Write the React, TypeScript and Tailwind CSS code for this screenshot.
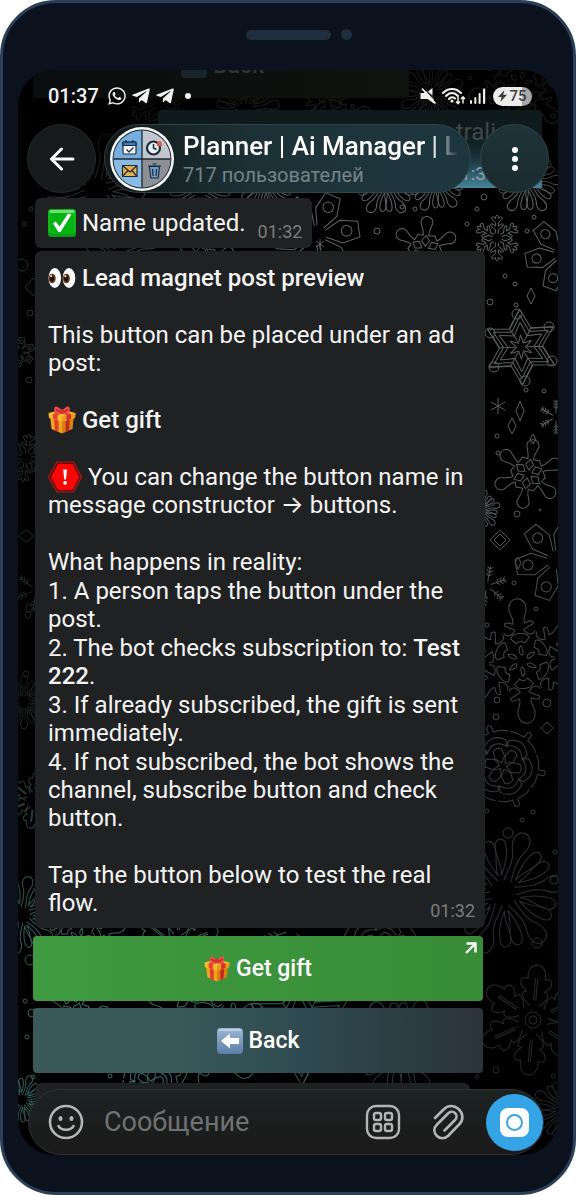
import React, { FC, ReactNode } from "react";
import { FaTelegramPlane, FaWhatsapp } from "react-icons/fa";

interface IconProps {
  className?: string;
}

interface FlakeProps {
  x: number;
  y: number;
  size: number;
  turn?: number;
  kind: FlakeKind;
}

type FlakeKind =
  | "branch"
  | "petal"
  | "star"
  | "drop"
  | "wheel"
  | "leaf"
  | "gem"
  | "feather"
  | "bloom";

// One arm of every flake, drawn upwards from the centre on a radius of 50
const ARMS: Record<FlakeKind, string> = {
  branch:
    "M-3 -10V-18L-13 -26Q-16 -30 -11 -31L-3 -26V-33L-11 -41Q-13 -46 -8 -46L-3 -42V-47Q0 -52 3 -47V-42L8 -46Q13 -46 11 -41L3 -33V-26L11 -31Q16 -30 13 -26L3 -18V-10",
  petal:
    "M-3 -10C-2 -22 -1 -26 -4 -34C-9 -42 -7 -51 0 -51S9 -42 4 -34C1 -26 2 -22 3 -10M-6 -13C-8 -22 -22 -30 -19 -38C-14 -46 -6 -34 -6 -13M6 -13C8 -22 22 -30 19 -38C14 -46 6 -34 6 -13",
  star: "M-25 -43L0 -28L25 -43M-21 -36L0 -23L21 -36M-16 -28L0 -17L16 -28M-8 -14L0 -6L8 -14M-25 -43V-14M0 -28V-8",
  drop: "M-4 -22C-4 -32 -9 -38 -9 -42A9 9 0 0 1 9 -42C9 -38 4 -32 4 -22L14 -22M0 -22L-6 -14L0 -6L6 -14ZM-4 -22L-13 -23",
  wheel:
    "M-3 -42V-49Q0 -53 3 -49V-42Q13 -42 20 -37M-3 -42Q-13 -42 -20 -37M-12 -21Q0 -34 12 -21L14 -28Q0 -42 -14 -28ZM-6 -11L0 -4L6 -11L5 -20Q0 -24 -5 -20Z",
  leaf: "M-4 -13C-14 -20 -13 -27 -8 -26C-17 -32 -16 -40 -8 -38C-9 -46 -5 -51 0 -51S9 -46 8 -38C16 -40 17 -32 8 -26C13 -27 14 -20 4 -13M-1 -18V-39M1 -39V-18",
  gem: "M-4 -10L-13 -28L-9 -48L9 -48L13 -28L4 -10M0 -32m-6 -2a6 6 0 1 0 12 0a6 6 0 1 0 -12 0",
  feather:
    "M0 -10V-48M0 -40L-7 -47M0 -40L7 -47M0 -32L-8 -39M0 -32L8 -39M0 -24L-7 -30M0 -24L7 -30",
  bloom:
    "M-4 -30L-14 -35Q-14 -40 -6 -36C-3 -42 -10 -46 -8 -52A8 8 0 0 1 8 -52C10 -46 3 -42 6 -36Q14 -40 14 -35L4 -30M-15 -28C-13 -24 -8 -24 -4 -30M15 -28C13 -24 8 -24 4 -30M-9 -22C-7 -28 7 -28 9 -22L4 -17Q0 -21 -4 -17ZM0 -15C-3 -11 -2 -7 0 -6S3 -11 0 -15",
};

const FLAKES: FlakeProps[] = [
  { x: 497, y: 238, size: 23, kind: "branch" },
  { x: 425, y: 250, size: 33, turn: 4, kind: "drop" },
  { x: 317, y: 235, size: 44, turn: 22, kind: "gem" },
  { x: 386, y: 182, size: 34, turn: 30, kind: "petal" },
  { x: 436, y: 180, size: 32, turn: 24, kind: "petal" },
  { x: 527, y: 180, size: 34, turn: 30, kind: "petal" },
  { x: 562, y: 254, size: 38, turn: 20, kind: "gem" },
  { x: 521, y: 347, size: 38, turn: 28, kind: "star" },
  { x: 556, y: 417, size: 18, kind: "feather" },
  { x: 528, y: 474, size: 34, turn: 10, kind: "drop" },
  { x: 480, y: 510, size: 20, turn: 15, kind: "petal" },
  { x: 556, y: 560, size: 42, turn: 20, kind: "gem" },
  { x: 487, y: 586, size: 21, turn: 10, kind: "feather" },
  { x: 522, y: 661, size: 52, turn: -5, kind: "bloom" },
  { x: 503, y: 766, size: 42, turn: 40, kind: "wheel" },
  { x: 503, y: 893, size: 62, turn: 20, kind: "petal" },
  { x: 533, y: 1020, size: 54, turn: 5, kind: "leaf" },
  { x: 566, y: 1110, size: 34, kind: "petal" },
  { x: 96, y: 190, size: 56, turn: 12, kind: "petal" },
  { x: 200, y: 190, size: 34, kind: "petal" },
  { x: 265, y: 182, size: 32, turn: 18, kind: "petal" },
  { x: 160, y: 104, size: 30, turn: 8, kind: "branch" },
  { x: 245, y: 110, size: 34, turn: 20, kind: "petal" },
  { x: 330, y: 118, size: 34, turn: 20, kind: "bloom" },
  { x: 432, y: 94, size: 32, turn: 8, kind: "petal" },
  { x: 520, y: 84, size: 44, turn: 15, kind: "bloom" },
  { x: 120, y: 256, size: 40, turn: 8, kind: "petal" },
  { x: 205, y: 262, size: 30, turn: 8, kind: "drop" },
  { x: 20, y: 352, size: 15, turn: 8, kind: "gem" },
  { x: 26, y: 458, size: 24, turn: 8, kind: "branch" },
  { x: 36, y: 590, size: 22, turn: 8, kind: "feather" },
  { x: 24, y: 702, size: 26, kind: "petal" },
  { x: 34, y: 800, size: 28, turn: 8, kind: "leaf" },
  { x: 22, y: 915, size: 38, turn: 10, kind: "petal" },
  { x: 80, y: 940, size: 40, turn: 10, kind: "bloom" },
  { x: 176, y: 946, size: 44, turn: 8, kind: "leaf" },
  { x: 292, y: 930, size: 30, turn: 10, kind: "feather" },
  { x: 380, y: 952, size: 46, turn: 20, kind: "wheel" },
  { x: 74, y: 1018, size: 36, turn: 20, kind: "drop" },
  { x: 150, y: 1084, size: 32, turn: 10, kind: "wheel" },
  { x: 200, y: 1032, size: 56, turn: 10, kind: "bloom" },
  { x: 300, y: 1030, size: 56, turn: 28, kind: "star" },
  { x: 400, y: 1046, size: 50, turn: 28, kind: "petal" },
  { x: 22, y: 1100, size: 25, turn: 20, kind: "petal" },
];

// x, y, radius
const BUBBLES: [number, number, number][] = [
  [22, 265, 6],
  [30, 313, 3],
  [29, 380, 3],
  [24, 224, 2],
  [31, 209, 2],
  [30, 608, 4],
  [28, 615, 3],
  [26, 674, 3],
  [30, 960, 5],
  [25, 1001, 2],
  [32, 1013, 4],
  [27, 1037, 2],
  [33, 1077, 2],
  [110, 1076, 2],
  [377, 231, 3],
  [402, 207, 2],
  [415, 209, 2],
  [477, 209, 2],
  [484, 197, 3],
  [467, 224, 2],
  [527, 231, 2],
  [534, 217, 2],
  [505, 276, 2],
  [515, 284, 2],
  [490, 302, 3],
  [517, 314, 5],
  [516, 305, 2],
  [490, 333, 5],
  [549, 327, 5],
  [494, 367, 5],
  [552, 361, 5],
  [525, 381, 5],
  [526, 390, 2],
  [544, 391, 2],
  [497, 436, 2],
  [498, 453, 2],
  [517, 514, 3],
  [540, 510, 1],
  [514, 583, 2],
  [536, 609, 2],
  [487, 625, 2],
  [497, 700, 3],
  [547, 703, 4],
  [496, 717, 3],
  [487, 811, 2],
  [522, 820, 2],
  [533, 812, 2],
  [508, 833, 5],
  [554, 880, 4],
  [555, 852, 2],
  [537, 943, 5],
  [533, 1020, 8],
  [533, 1020, 4],
  [496, 1070, 3],
  [477, 1077, 2],
  [553, 1076, 2],
  [470, 78, 2],
  [553, 116, 2],
];

// x, y, half width, half height
const DIAMONDS: [number, number, number, number][] = [
  [531, 296, 4, 8],
  [520, 411, 4, 10],
  [512, 426, 4, 8],
  [533, 439, 3, 5],
  [500, 540, 10, 10],
  [500, 540, 6, 6],
  [518, 563, 3, 6],
  [547, 728, 6, 6],
  [33, 287, 8, 9],
  [26, 536, 8, 6],
];

const Flake: FC<FlakeProps> = ({ x, y, size, turn = 0, kind }) => (
  <g
    transform={`translate(${x} ${y}) rotate(${turn}) scale(${size / 50})`}
    strokeWidth={50 / size}
  >
    {[0, 60, 120, 180, 240, 300].map((angle) => (
      <path key={angle} d={ARMS[kind]} transform={`rotate(${angle})`} />
    ))}
  </g>
);

const Wallpaper: FC = () => (
  <svg
    aria-hidden="true"
    viewBox="18 70 540 1085"
    preserveAspectRatio="xMidYMid slice"
    className="absolute inset-0 h-full w-full"
  >
    <defs>
      <linearGradient id="snow" x1="0" y1="0" x2="0" y2="1">
        <stop offset="0" stopColor="#161616" />
        <stop offset="0.08" stopColor="#242727" />
        <stop offset="0.12" stopColor="#5f6665" />
        <stop offset="0.35" stopColor="#585e5d" />
        <stop offset="0.55" stopColor="#44484a" />
        <stop offset="0.75" stopColor="#2d3033" />
        <stop offset="1" stopColor="#202225" />
      </linearGradient>
      <radialGradient
        id="snowGlow"
        gradientUnits="userSpaceOnUse"
        cx="120"
        cy="1020"
        r="340"
      >
        <stop offset="0" stopColor="#427c78" />
        <stop offset="0.5" stopColor="#3a6c69" stopOpacity="0.7" />
        <stop offset="1" stopColor="#3a6c69" stopOpacity="0" />
      </radialGradient>
      <linearGradient id="leftShade" x1="0" x2="1">
        <stop offset="0" stopOpacity="0.55" />
        <stop offset="0.5" stopOpacity="0.4" />
        <stop offset="1" stopOpacity="0" />
      </linearGradient>
      <mask
        id="flakes"
        maskUnits="userSpaceOnUse"
        x="18"
        y="70"
        width="540"
        height="1085"
      >
        <g fill="none" stroke="#fff">
          {FLAKES.map((flake) => (
            <Flake key={`${flake.x}-${flake.y}`} {...flake} />
          ))}
          {BUBBLES.map(([x, y, r]) => (
            <circle key={`${x}-${y}-${r}`} cx={x} cy={y} r={r} />
          ))}
          {DIAMONDS.map(([x, y, w, h]) => (
            <path
              key={`${x}-${y}-${w}`}
              d={`M${x} ${y - h}L${x + w} ${y}L${x} ${y + h}L${x - w} ${y}Z`}
            />
          ))}
          <path d="M498 398V414M491 402L505 410M505 402L491 410" />
          <path d="M320 239V249M316 241L324 247M324 241L316 247" />
        </g>
      </mask>
    </defs>
    <g mask="url(#flakes)">
      <rect x="18" y="70" width="540" height="1085" fill="url(#snow)" />
      <rect x="18" y="70" width="240" height="1085" fill="url(#leftShade)" />
      <rect x="18" y="70" width="540" height="1085" fill="url(#snowGlow)" />
    </g>
  </svg>
);

const GiftIcon: FC<IconProps> = ({ className }) => (
  <svg viewBox="0 0 28 28" aria-hidden="true" className={className}>
    <path d="M2 9L14 12.500V27.500L3.500 23Z" fill="#f0a21c" />
    <path d="M26 9L14 12.500V27.500L24.500 23Z" fill="#d98212" />
    <path d="M6 10.500L10.500 11.500V26L7 24.500Z" fill="#e03a2c" />
    <path d="M22 10.500L17.500 11.500V26L21 24.500Z" fill="#c42a24" />
    <path d="M0.500 7L14 3.500L27.500 7L27 12L14 15.500L1 12Z" fill="#f8b92e" />
    <path d="M14 10.500L27.500 7L27 12L14 15.500Z" fill="#e9991b" />
    <path d="M5 8L9.500 9.200V14.300L5 13Z" fill="#e8402f" />
    <path d="M23 8L18.500 9.200V14.300L23 13Z" fill="#d0302a" />
    <path d="M5 8L14 4.500L23 8L18.500 9.200L14 7L9.500 9.200Z" fill="#d9342c" />
    <path
      d="M14 5.500C11 0.500 7.500 -0.500 6.500 1.500C5.500 4 7 8 8.500 8.500C10.500 8.500 12.500 7.500 14 7C15.500 7.500 17.500 8.500 19.500 8.500C21 8 22.500 4 21.500 1.500C20.500 -0.500 17 0.500 14 5.500Z"
      fill="#ef4b4b"
    />
    <path d="M8 3.500L12 6M20 3.500L16 6" stroke="#b3201f" strokeWidth="1.200" />
    <rect x="11.800" y="3" width="4.400" height="4.800" rx="1.500" fill="#d9302f" />
  </svg>
);

const CheckIcon: FC<IconProps> = ({ className }) => (
  <svg viewBox="0 0 28 28" aria-hidden="true" className={className}>
    <rect width="28" height="28" rx="3" fill="#0c9a1b" />
    <rect x="0.500" y="0.500" width="27" height="24" rx="3" fill="#14c023" />
    <rect x="1.500" y="1" width="25" height="3" rx="1.500" fill="#6fe072" />
    <rect x="2" y="4" width="24" height="21" rx="2" fill="#05b412" />
    <path
      d="M5 14.500L7.800 12.500L11.500 17.500L20 4.500L23.500 5.500L12.500 23H10.500Z"
      fill="#fff"
    />
  </svg>
);

const EyesIcon: FC<IconProps> = ({ className }) => (
  <svg viewBox="0 0 28 28" aria-hidden="true" className={className}>
    <ellipse cx="6.800" cy="14" rx="6.300" ry="10" fill="#fafafa" />
    <ellipse cx="21" cy="14" rx="6.300" ry="10" fill="#fafafa" />
    <ellipse cx="4.200" cy="14.500" rx="3.500" ry="4.800" fill="#6b3a17" />
    <ellipse cx="18.400" cy="14.500" rx="3.500" ry="4.800" fill="#6b3a17" />
    <ellipse cx="4" cy="14.500" rx="2" ry="3" fill="#160b05" />
    <ellipse cx="18.200" cy="14.500" rx="2" ry="3" fill="#160b05" />
    <circle cx="3.200" cy="12.300" r="1" fill="#fff" />
    <circle cx="17.400" cy="12.300" r="1" fill="#fff" />
  </svg>
);

const AlertIcon: FC<IconProps> = ({ className }) => (
  <svg viewBox="0 0 34 32" aria-hidden="true" className={className}>
    <path
      d="M9 1H25.500L33.500 16L25.500 31H9L0.500 16Z"
      fill="#5b0b0b"
      stroke="#c11313"
      strokeWidth="1.200"
    />
    <path d="M10 3H24.500L31.200 16L24.500 29H10L3 16Z" fill="#f90606" />
    <path d="M15.200 8.500H19L18 18.500H16.200Z" fill="#fff" />
    <circle cx="17.100" cy="21.800" r="1.900" fill="#fff" />
  </svg>
);

const BackEmoji: FC<IconProps> = ({ className }) => (
  <svg viewBox="0 0 26 26" aria-hidden="true" className={className}>
    <defs>
      <linearGradient id="backTile" x1="0" y1="0" x2="0" y2="1">
        <stop offset="0" stopColor="#9db8d6" />
        <stop offset="1" stopColor="#5b7fa8" />
      </linearGradient>
    </defs>
    <rect width="26" height="26" rx="4" fill="url(#backTile)" />
    <rect x="2" y="1" width="22" height="2" rx="1" fill="#bcd0e6" />
    <path d="M4 13L13 5.500V10H22V16H13V20.500Z" fill="#fff" />
  </svg>
);

const Avatar: FC = () => (
  <svg
    viewBox="0 0 64 64"
    role="img"
    aria-label="Planner"
    className="h-16 w-16 shrink-0"
  >
    <defs>
      <clipPath id="avatarClip">
        <circle cx="32" cy="32" r="28.500" />
      </clipPath>
    </defs>
    <circle cx="32" cy="32" r="32" fill="#f5f7f8" />
    <circle cx="32" cy="32" r="29.500" fill="#1d2730" />
    <g clipPath="url(#avatarClip)">
      <rect width="32" height="32" fill="#74aede" />
      <rect x="32" width="32" height="32" fill="#c2c7cd" />
      <rect y="32" width="32" height="32" fill="#8abbe4" />
      <rect x="32" y="32" width="32" height="32" fill="#8c8f96" />
      <path d="M32 0V64M0 32H64" stroke="#1d2730" strokeWidth="1.300" />
    </g>
    <g stroke="#1c2b3c" strokeWidth="1.200" fill="none" strokeLinejoin="round">
      <rect x="13" y="15" width="13" height="12" rx="1" fill="#f2f6fa" />
      <path d="M13 15H26V18.500H13Z" fill="#3f7fb8" />
      <path d="M16 13V16M23 13V16M16.500 22.500L19 25L23.500 20.500" />
      <circle cx="43.500" cy="21" r="6.500" strokeWidth="2.200" fill="#e8edf1" />
      <path d="M43.500 17V21L46.500 22.500" strokeWidth="1.500" />
      <rect x="12.500" y="38.500" width="14.500" height="11" fill="#e8b04b" />
      <path d="M12.500 38.500L20 45L27 38.500M12.500 49.500L18 43.500M27 49.500L22 43.500" />
      <path d="M39.500 39.500L40.800 51H48.200L49.500 39.500Z" fill="#6f9cc4" />
      <path d="M38 39H51M42.500 37H46.500M42.500 42L43 49M46.500 42L46 49" />
    </g>
    <path d="M46.500 19C47.500 17.500 46.500 14 49.500 14S51.500 17.500 52.500 19Z" fill="#d9604a" />
  </svg>
);

const MutedIcon: FC<IconProps> = ({ className }) => (
  <svg viewBox="0 0 16 18" aria-hidden="true" className={className}>
    <path d="M0.500 6H4L6.500 3.500L14 11.500V16.500L7.500 12H0.500Z" fill="#eee" />
    <path d="M8 4.500L12.500 1V8.500Z" fill="#eee" />
    <path d="M2 1.500L15.500 16.500" stroke="#eee" strokeWidth="1.800" />
    <path d="M3.500 0.700L16 14.700" stroke="#000" strokeWidth="1" />
  </svg>
);

const WifiIcon: FC<IconProps> = ({ className }) => (
  <svg
    viewBox="0 0 24 18"
    aria-hidden="true"
    fill="none"
    stroke="#eee"
    className={className}
  >
    <path
      d="M1 6C6 0.500 14 0.500 19 6M4 9C7.500 5 12.500 5 16 9M7 12C9 9.700 11.500 9.700 13 11.500"
      strokeWidth="2"
      strokeLinecap="round"
    />
    <circle cx="10" cy="14" r="1.600" fill="#eee" stroke="none" />
    <path
      d="M16 10V16.500M14 14.500L16 16.700L18 14.500M21 16.500V10M19 12L21 9.800L23 12"
      strokeWidth="1.500"
    />
  </svg>
);

const SignalIcon: FC<IconProps> = ({ className }) => (
  <svg viewBox="0 0 16 17" aria-hidden="true" className={className}>
    <g fill="#eee">
      <rect y="12" width="2" height="4" rx="1" />
      <rect x="4.300" y="9" width="2" height="7" rx="1" />
      <rect x="8.600" y="5" width="2" height="11" rx="1" />
      <rect x="13" y="0.500" width="2.200" height="15.500" rx="1" />
    </g>
  </svg>
);

const StatusBar: FC = () => (
  <div className="flex h-[22px] items-center pr-[26px] pl-[30px] text-[#f2f2f2]">
    <span className="text-[20px] leading-[22px] font-medium">01:37</span>
    <FaWhatsapp className="ml-2 h-5 w-5" />
    <FaTelegramPlane className="ml-1 h-5 w-5" />
    <FaTelegramPlane className="ml-1 h-5 w-5" />
    <span className="ml-2.5 h-1.5 w-1.5 rounded-full bg-[#f2f2f2]" />
    <div className="ml-auto flex items-center">
      <MutedIcon className="h-[18px] w-4" />
      <WifiIcon className="ml-1.5 h-[18px] w-6" />
      <SignalIcon className="ml-1 h-[17px] w-4" />
      <div className="ml-[7px] flex h-[19px] w-[39px] items-center justify-center gap-0.5 rounded-full bg-linear-to-r from-[#ececec] from-75% to-[#a8a8a8] to-75% text-[15px] leading-[19px] font-medium text-[#3c3c3c]">
        <svg viewBox="0 0 9 12" aria-hidden="true" className="h-3 w-[9px]">
          <path d="M6.500 0L0 7H3.700L2.300 12L9 4.800H5.200Z" fill="#3c3c3c" />
        </svg>
        75
      </div>
    </div>
  </div>
);

const ChatHeader: FC = () => (
  <header className="mt-[17px] flex pr-[9px] pl-[9px]">
    <button
      type="button"
      aria-label="Back"
      className="flex h-[69px] w-[69px] shrink-0 items-center justify-center rounded-full border border-[#262a29] bg-[#171a1a]"
    >
      <svg
        viewBox="0 0 26 24"
        fill="none"
        stroke="#fff"
        strokeWidth="3"
        strokeLinecap="round"
        strokeLinejoin="round"
        className="h-6 w-[26px]"
      >
        <path d="M24 12H3M12.500 2L2.500 12L12.500 22" />
      </svg>
    </button>
    <div className="ml-2 flex h-[69px] min-w-0 flex-1 items-center rounded-full border border-[#2f4549] bg-linear-to-r from-[#121919] via-[#1c3136] via-40% to-[#1e373f] pr-3 pl-[5px]">
      <Avatar />
      <div className="ml-[9px] min-w-0 flex-1 pt-0.5">
        <h1 className="overflow-hidden mask-r-from-90% text-[26px] leading-[30px] font-medium whitespace-nowrap text-white">
          Planner | Ai Manager | L
        </h1>
        <p className="text-[20px] leading-7 text-[#758488]">
          717 пользователей
        </p>
      </div>
    </div>
    <button
      type="button"
      aria-label="Menu"
      className="ml-[9px] flex h-[69px] w-[69px] shrink-0 flex-col items-center justify-center gap-[3px] rounded-full border border-[#2f4549] bg-linear-to-b from-[#1d3439] to-[#1b2a2e]"
    >
      <span className="h-1.5 w-1.5 rounded-full bg-white" />
      <span className="h-1.5 w-1.5 rounded-full bg-white" />
      <span className="h-1.5 w-1.5 rounded-full bg-white" />
    </button>
  </header>
);

// Older messages that have scrolled up under the header
const ScrolledMessages: FC = () => (
  <div aria-hidden="true" className="absolute inset-x-0 top-0">
    <div className="absolute top-0 left-[15px] h-7 w-[376px] overflow-hidden bg-linear-to-r from-[#0a0d0d] to-[#10120f] text-[23px] leading-7 font-medium text-[#303434]">
      <span className="absolute -top-4 left-[148px] h-6 w-[26px] rounded bg-[#1b232a]" />
      <span className="absolute -top-[18px] left-[180px]">Back</span>
    </div>
    <div className="absolute top-10 right-4 h-[78px] w-[384px] rounded-t bg-linear-to-b from-[#0e1a1b] from-30% via-[#173038] via-60% to-[#47849a]">
      <span className="absolute top-2 right-[46px] text-[24px] leading-7 text-[#40484a]">
        trali
      </span>
      <span className="absolute right-[56px] bottom-0.5 text-[19px] leading-6 text-[#8fa3a9]">
        1:3
      </span>
    </div>
  </div>
);

const Time: FC = () => (
  <time className="text-[18px] leading-5 text-[#7b7d7e]">01:32</time>
);

const Bubble: FC<{ className: string; children?: ReactNode }> = ({
  className,
  children,
}) => (
  <div className={`ml-[17px] rounded-md bg-[#202123] ${className}`}>
    {children}
  </div>
);

const Composer: FC = () => (
  <form className="relative -mt-6 mr-3.5 ml-2.5 flex h-[66px] items-center rounded-full border border-[#303334] bg-linear-to-b from-[#1d2223] to-[#1a1a19] pl-[19px]">
    <button type="button" aria-label="Emoji" className="shrink-0">
      <svg
        viewBox="0 0 36 36"
        fill="none"
        stroke="#b4b6b6"
        strokeWidth="2.600"
        className="h-9 w-9"
      >
        <circle cx="18" cy="18" r="16" />
        <path d="M10.500 22C13 27 23 27 25.500 22" strokeLinecap="round" />
        <ellipse cx="12.500" cy="14.500" rx="2" ry="2.500" fill="#b4b6b6" stroke="none" />
        <ellipse cx="23.500" cy="14.500" rx="2" ry="2.500" fill="#b4b6b6" stroke="none" />
      </svg>
    </button>
    <input
      type="text"
      aria-label="Сообщение"
      placeholder="Сообщение"
      className="ml-5 min-w-0 flex-1 bg-transparent text-[27px] leading-8 text-white outline-none placeholder:text-[#6f7272]"
    />
    <button type="button" aria-label="Commands" className="shrink-0">
      <svg
        viewBox="0 0 36 36"
        fill="none"
        stroke="#b4b6b6"
        strokeWidth="2.400"
        className="h-9 w-9"
      >
        <rect x="2" y="2" width="32" height="32" rx="9" />
        <rect x="9" y="9" width="7" height="7" rx="2" />
        <rect x="20" y="9" width="7" height="7" rx="2" />
        <rect x="9" y="20" width="7" height="7" rx="2" />
        <rect x="20" y="20" width="7" height="7" rx="2" />
      </svg>
    </button>
    <button type="button" aria-label="Attach" className="ml-[31px] shrink-0">
      <svg
        viewBox="0 0 34 36"
        fill="none"
        stroke="#b4b6b6"
        strokeWidth="2.600"
        strokeLinecap="round"
        className="h-9 w-[34px]"
      >
        <path d="M3 14L11.500 5.500C16 1 22 1 26.500 5C31.500 9.500 31.500 16 27.500 20L16.500 31.500C13 35 8 35 5 32C1.500 28.500 1.500 24 5 20.500L16 9.500C18.500 7 21.500 7.500 23 9C25 11 25 14 23 16L12.500 26.500" />
      </svg>
    </button>
    <button
      type="button"
      aria-label="Camera"
      className="ml-5 flex h-[57px] w-[57px] shrink-0 items-center justify-center rounded-full bg-[#35a4e6]"
    >
      <span className="flex h-[29px] w-[29px] items-center justify-center rounded-lg bg-white">
        <span className="h-[17px] w-[17px] rounded-full border-2 border-[#35a4e6]" />
      </span>
    </button>
  </form>
);

const App: FC = () => {
  return (
    <div className="rounded-[56px] border-[3px] border-[#2b4058] bg-[#0c121d] px-[15px] pb-[37px] font-['Roboto','Inter',sans-serif]">
      <div className="flex h-[67px] items-center justify-center gap-2.5 pb-1">
        <span className="w-[11px]" />
        <span className="h-2.5 w-[85px] rounded-full bg-[#202d3f]" />
        <span className="h-[11px] w-[11px] rounded-full bg-[#202d3f]" />
      </div>
      <main className="relative overflow-hidden rounded-[36px] bg-black">
        <Wallpaper />
        <ScrolledMessages />
        <div className="relative pt-[15px]">
          <StatusBar />
          <ChatHeader />

          <Bubble className="mt-[5px] flex h-[50px] w-fit items-end gap-3 pr-2.5 pb-1.5 pl-[13px]">
            <p className="pb-[5px] text-[24px] leading-7 text-[#f4f4f4]">
              <CheckIcon className="inline h-7 w-7 align-top" /> Name updated.
            </p>
            <Time />
          </Bubble>

          <Bubble className="mt-[3px] w-5/6 pt-[13px] pr-2.5 pb-[7px] pl-[13px]">
            <div className="flex flex-col gap-[29px] text-[24px] leading-7 text-[#f4f4f4]">
              <p className="font-medium">
                <EyesIcon className="inline h-7 w-7 align-top" /> Lead magnet
                post preview
              </p>
              <p>This button can be placed under an ad post:</p>
              <p className="font-medium">
                <GiftIcon className="inline h-7 w-7 align-top" /> Get gift
              </p>
              <p>
                <AlertIcon className="-my-0.5 inline h-8 w-[34px] align-top" />{" "}
                You can change the button name in message constructor → buttons.
              </p>
              <div className="flex flex-col gap-px">
                <p>What happens in reality:</p>
                <p>1. A person taps the button under the post.</p>
                <p>
                  2. The bot checks subscription to:{" "}
                  <b className="font-medium">Test 222</b>.
                </p>
                <p>3. If already subscribed, the gift is sent immediately.</p>
                <p>
                  4. If not subscribed, the bot shows the channel, subscribe
                  button and check button.
                </p>
              </div>
              <p>Tap the button below to test the real flow.</p>
            </div>
            <div className="-mt-4 flex justify-end">
              <Time />
            </div>
          </Bubble>

          <div className="mt-2 ml-[15px] flex w-5/6 flex-col gap-[7px] text-[23px] leading-7 font-medium text-white">
            <button
              type="button"
              className="relative flex h-[65px] items-center justify-center gap-1.5 rounded bg-linear-to-r from-[#3f9a41] to-[#388c37]"
            >
              <GiftIcon className="h-[26px] w-[26px]" />
              Get gift
              <svg
                viewBox="0 0 12 12"
                fill="none"
                stroke="#fff"
                strokeWidth="2.400"
                className="absolute top-1.5 right-1.5 h-3 w-3"
              >
                <path d="M1.500 1.500H10.500V10.500M10.500 1.500L1 11" />
              </svg>
            </button>
            <button
              type="button"
              className="flex h-[65px] items-center justify-center gap-1.5 rounded bg-linear-to-r from-[#3b595b] from-30% via-[#2e4a50] via-60% to-[#2b333b]"
            >
              <BackEmoji className="h-[26px] w-[26px]" />
              Back
            </button>
          </div>

          <Bubble className="mt-[10px] h-[30px] w-[435px] max-w-full" />
          <Composer />
        </div>
      </main>
    </div>
  );
};

export default App;
